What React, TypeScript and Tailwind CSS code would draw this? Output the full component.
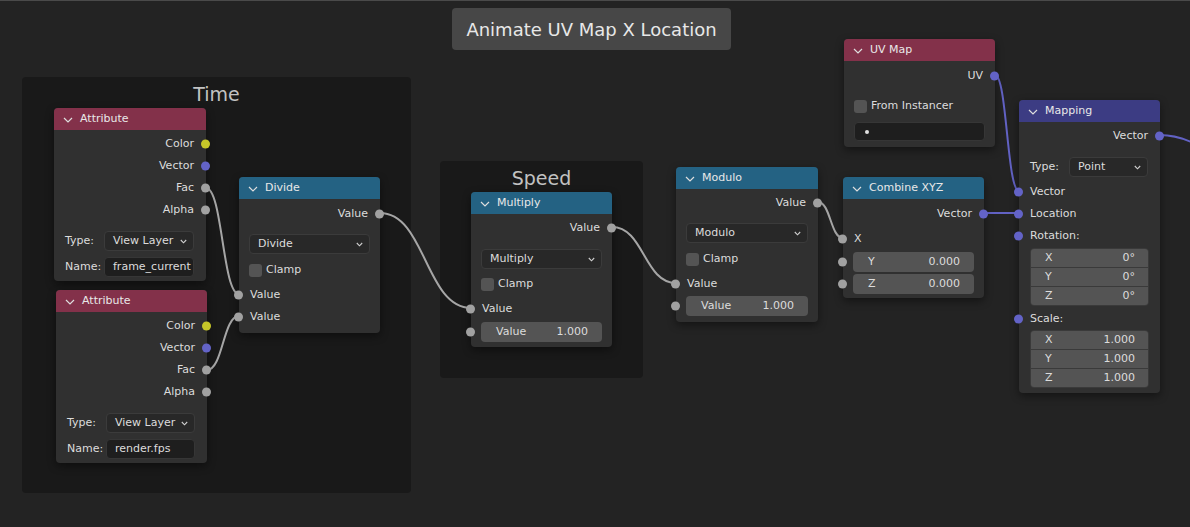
import React from "react";

type Sock = "gray" | "yellow" | "purple";

const sockColor: Record<Sock, string> = {
  gray: "bg-[#a1a1a1]",
  yellow: "bg-[#c7c729]",
  purple: "bg-[#6363c7]",
};

const Socket = ({ side, c = "gray" }: { side: "l" | "r"; c?: Sock }) => (
  <span
    className={`absolute top-1/2 -translate-y-1/2 w-[9px] h-[9px] rounded-full ${sockColor[c]} ${
      side === "l" ? "left-[-5px]" : "right-[-4px]"
    }`}
  />
);

const HeadChevron = () => (
  <svg width="10" height="6" viewBox="0 0 10 6" className="shrink-0">
    <path d="M1 1 L5 5 L9 1" fill="none" stroke="#dedede" strokeWidth="1.2" />
  </svg>
);

const DropChevron = () => (
  <svg width="7" height="5" viewBox="0 0 7 5" className="shrink-0">
    <path d="M0.8 1 L3.5 3.8 L6.2 1" fill="none" stroke="#d0d0d0" strokeWidth="1.1" />
  </svg>
);

interface NodeProps {
  pos: string;
  head: string;
  title: string;
  children: React.ReactNode;
}

// one node of the graph, placed on the canvas
const NodeBox: React.FC<NodeProps> = ({ pos, head, title, children }) => (
  <div className={`absolute ${pos} rounded-[4px] bg-[#303030] shadow-[0_3px_8px_rgba(0,0,0,0.45)]`}>
    <div className={`h-[22px] rounded-t-[4px] ${head} flex items-center pl-[9px] pt-px gap-[7px] text-[11px] text-[#e8e8e8]`}>
      <HeadChevron />
      <span>{title}</span>
    </div>
    {children}
  </div>
);

const Out = ({ label, c = "gray" }: { label: string; c?: Sock }) => (
  <div className="relative h-[22px] flex items-center justify-end pr-[12px]">
    {label}
    <Socket side="r" c={c} />
  </div>
);

const In = ({ label, c = "gray" }: { label: string; c?: Sock }) => (
  <div className="relative h-[22px] flex items-center pl-[11px]">
    {label}
    <Socket side="l" c={c} />
  </div>
);

const Drop = ({ value }: { value: string }) => (
  <div className="h-[20px] px-[10px]">
    <div className="h-full rounded-[4px] bg-[#282828] border border-[#3b3b3b] flex items-center justify-between pl-[8px] pr-[6px]">
      <span>{value}</span>
      <DropChevron />
    </div>
  </div>
);

const LabeledDrop = ({ label, value }: { label: string; value: string }) => (
  <div className="h-[20px] flex items-center pl-[11px] pr-[12px]">
    <span className="w-[39px] shrink-0">{label}</span>
    <div className="flex-1 h-full rounded-[4px] bg-[#282828] border border-[#3b3b3b] flex items-center justify-between pl-[8px] pr-[6px]">
      <span>{value}</span>
      <DropChevron />
    </div>
  </div>
);

const LabeledText = ({ label, value }: { label: string; value: string }) => (
  <div className="h-[20px] flex items-center pl-[11px] pr-[12px]">
    <span className="w-[39px] shrink-0">{label}</span>
    <div className="flex-1 h-full rounded-[4px] bg-[#1e1e1e] border border-[#363636] flex items-center pl-[8px]">
      {value}
    </div>
  </div>
);

const Check = ({ label }: { label: string }) => (
  <div className="h-[22px] flex items-center pl-[10px] gap-[4px]">
    <span className="w-[13px] h-[13px] rounded-[3px] bg-[#545454]" />
    {label}
  </div>
);

const Field = ({ label, value }: { label: string; value: string }) => (
  <div className="relative h-[20px] px-[10px]">
    <div className="h-full rounded-[4px] bg-[#545454] flex items-center justify-between pl-[15px] pr-[14px]">
      <span>{label}</span>
      <span>{value}</span>
    </div>
    <Socket side="l" />
  </div>
);

const VecGroup = ({ rows }: { rows: [string, string][] }) => (
  <div className="mx-[11px] rounded-[4px] overflow-hidden flex flex-col gap-px bg-[#3a3a3a] border border-[#3a3a3a]">
    {rows.map(([k, v]) => (
      <div key={k} className="h-[18px] bg-[#545454] flex items-center justify-between pl-[14px] pr-[13px]">
        <span>{k}</span>
        <span>{v}</span>
      </div>
    ))}
  </div>
);

export default function App() {
  return (
    <div className="relative w-[1190px] h-[527px] overflow-hidden bg-[#232323] font-['DejaVu_Sans',sans-serif] text-[11px] text-[#dcdcdc]">
      <div className="absolute inset-x-0 top-0 h-px bg-[#4a4a4a]" />

      {/* frames */}
      <div className="absolute left-[452px] top-[8px] w-[279px] h-[42px] rounded-[4px] bg-[#474747] flex items-center justify-center text-[18px] text-[#e8e8e8]">
        Animate UV Map X Location
      </div>
      <div className="absolute left-[22px] top-[77px] w-[389px] h-[416px] rounded-[4px] bg-[#191919] flex justify-center">
        <span className="mt-[6px] h-[22px] leading-[22px] text-[19px] text-[#c2c2c2]">Time</span>
      </div>
      <div className="absolute left-[440px] top-[161px] w-[203px] h-[217px] rounded-[4px] bg-[#191919] flex justify-center">
        <span className="mt-[6px] h-[22px] leading-[22px] text-[19px] text-[#c2c2c2]">Speed</span>
      </div>

      {/* links */}
      <svg className="absolute inset-0" width="1190" height="527" fill="none">
        <g stroke="#a6a6a6" strokeWidth="2">
          <path d="M206 188 C222.5 188 222.5 294 239 294" />
          <path d="M207 370 C223 370 223 316 239 316" />
          <path d="M380 213 C425.5 213 425.5 308 471 308" />
          <path d="M612 227 C644 227 644 283 676 283" />
          <path d="M818 202 C830.5 202 830.5 238 843 238" />
        </g>
        <g stroke="#6262c4" strokeWidth="2">
          <path d="M995 75 C1007 75 1007 191 1019 191" />
          <path d="M984 213 L1019 213" />
          <path d="M1160 135 C1185 135 1205 148 1240 170" />
        </g>
      </svg>

      {/* Time frame nodes */}
      <NodeBox pos="left-[54px] top-[108px] w-[152px]" head="bg-[#83314a]" title="Attribute">
        <div className="h-[3px]" />
        <Out label="Color" c="yellow" />
        <Out label="Vector" c="purple" />
        <Out label="Fac" />
        <Out label="Alpha" />
        <div className="h-[10px]" />
        <LabeledDrop label="Type:" value="View Layer" />
        <div className="h-[6px]" />
        <LabeledText label="Name:" value="frame_current" />
        <div className="h-[4px]" />
      </NodeBox>

      <NodeBox pos="left-[56px] top-[290px] w-[151px]" head="bg-[#83314a]" title="Attribute">
        <div className="h-[3px]" />
        <Out label="Color" c="yellow" />
        <Out label="Vector" c="purple" />
        <Out label="Fac" />
        <Out label="Alpha" />
        <div className="h-[10px]" />
        <LabeledDrop label="Type:" value="View Layer" />
        <div className="h-[6px]" />
        <LabeledText label="Name:" value="render.fps" />
        <div className="h-[4px]" />
      </NodeBox>

      <NodeBox pos="left-[239px] top-[177px] w-[141px]" head="bg-[#246283]" title="Divide">
        <div className="h-[4px]" />
        <Out label="Value" />
        <div className="h-[9px]" />
        <Drop value="Divide" />
        <div className="h-[5px]" />
        <Check label="Clamp" />
        <div className="h-[3px]" />
        <In label="Value" />
        <In label="Value" />
        <div className="h-[5px]" />
      </NodeBox>

      {/* Speed frame */}
      <NodeBox pos="left-[471px] top-[192px] w-[141px]" head="bg-[#246283]" title="Multiply">
        <div className="h-[3px]" />
        <Out label="Value" />
        <div className="h-[10px]" />
        <Drop value="Multiply" />
        <div className="h-[4px]" />
        <Check label="Clamp" />
        <div className="h-[3px]" />
        <In label="Value" />
        <div className="h-[2px]" />
        <Field label="Value" value="1.000" />
        <div className="h-[5px]" />
      </NodeBox>

      <NodeBox pos="left-[676px] top-[167px] w-[142px]" head="bg-[#246283]" title="Modulo">
        <div className="h-[3px]" />
        <Out label="Value" />
        <div className="h-[9px]" />
        <Drop value="Modulo" />
        <div className="h-[5px]" />
        <Check label="Clamp" />
        <div className="h-[3px]" />
        <In label="Value" />
        <div className="h-px" />
        <Field label="Value" value="1.000" />
        <div className="h-[6px]" />
      </NodeBox>

      <NodeBox pos="left-[843px] top-[177px] w-[141px]" head="bg-[#246283]" title="Combine XYZ">
        <div className="h-[4px]" />
        <Out label="Vector" c="purple" />
        <div className="h-[3px]" />
        <In label="X" />
        <div className="h-[2px]" />
        <Field label="Y" value="0.000" />
        <div className="h-[2px]" />
        <Field label="Z" value="0.000" />
        <div className="h-[4px]" />
      </NodeBox>

      <NodeBox pos="left-[844px] top-[39px] w-[151px]" head="bg-[#83314a]" title="UV Map">
        <div className="h-[4px]" />
        <Out label="UV" c="purple" />
        <div className="h-[8px]" />
        <Check label="From Instancer" />
        <div className="h-[5px]" />
        <div className="h-[19px] px-[10px]">
          <div className="h-full rounded-[4px] bg-[#1e1e1e] border border-[#363636] flex items-center pl-[10px]">
            <span className="w-[4px] h-[4px] rounded-full bg-[#e0e0e0]" />
          </div>
        </div>
        <div className="h-[6px]" />
      </NodeBox>

      <NodeBox pos="left-[1019px] top-[100px] w-[141px]" head="bg-[#3c3c83]" title="Mapping">
        <div className="h-[3px]" />
        <Out label="Vector" c="purple" />
        <div className="h-[10px]" />
        <LabeledDrop label="Type:" value="Point" />
        <div className="h-[4px]" />
        <In label="Vector" c="purple" />
        <In label="Location" c="purple" />
        <In label="Rotation:" c="purple" />
        <div className="h-px" />
        <VecGroup rows={[["X", "0°"], ["Y", "0°"], ["Z", "0°"]]} />
        <div className="h-[2px]" />
        <In label="Scale:" c="purple" />
        <VecGroup rows={[["X", "1.000"], ["Y", "1.000"], ["Z", "1.000"]]} />
        <div className="h-[5px]" />
      </NodeBox>
    </div>
  );
}
